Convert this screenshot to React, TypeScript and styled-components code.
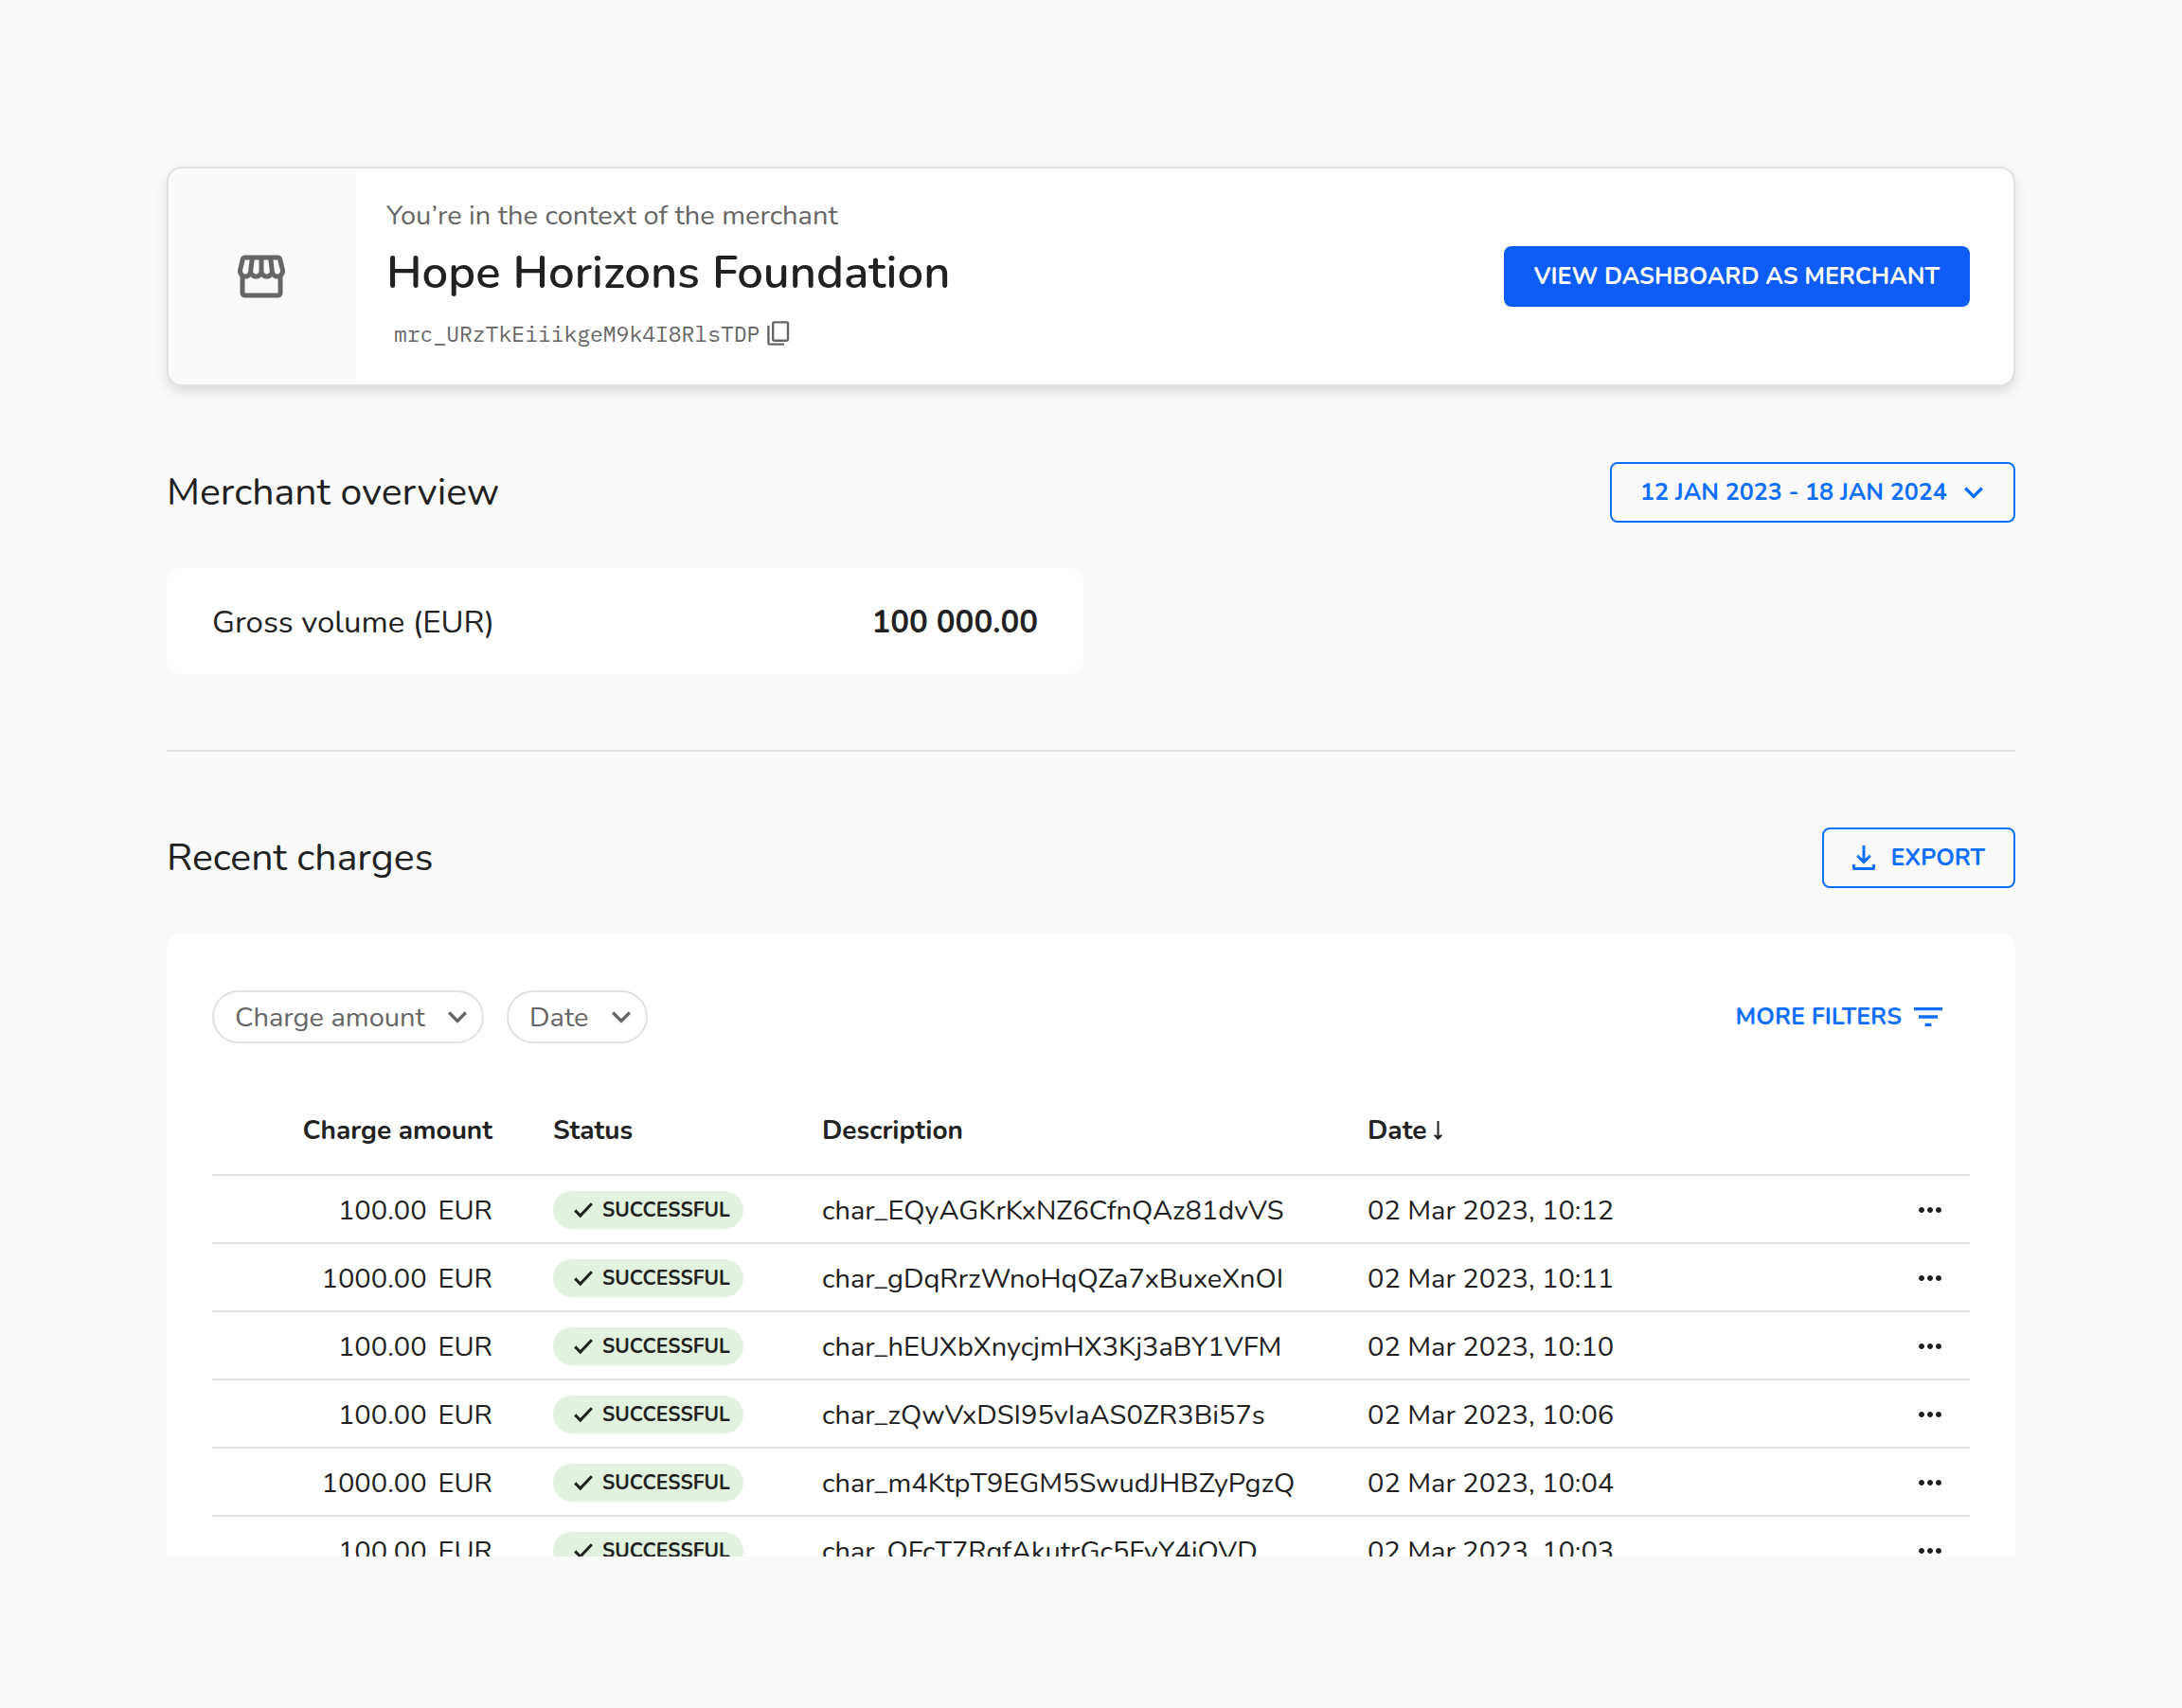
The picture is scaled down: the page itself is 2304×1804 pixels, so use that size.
import React from "react";
import styled, { createGlobalStyle, css } from "styled-components";
import {
  MdFilterList,
  MdKeyboardArrowDown,
  MdMoreHoriz,
  MdOutlineStorefront,
} from "react-icons/md";

const color = {
  page: "#fafafa",
  surface: "#ffffff",
  line: "#e0e0e0",
  text: "#212121",
  muted: "#666666",
  primary: "#0d5cf5",
  link: "#0f6ffd",
  success: "#e2f1e0",
};

const GlobalStyle = createGlobalStyle`
  *, *::before, *::after { box-sizing: border-box; }
  body {
    margin: 0;
    background: ${color.page};
    color: ${color.text};
    font-family: Nunito, Lato, sans-serif;
    font-size: 29px;
    font-variant-ligatures: none;
    -webkit-font-smoothing: antialiased;
  }
  button, select { font-family: inherit; font-variant-ligatures: none; cursor: pointer; }
  h1, h2, p, dl, dt, dd { margin: 0; }
`;

const Page = styled.main`
  display: flex;
  flex-direction: column;
  height: 100vh;
  min-height: 1400px;
  padding: 176px 176px 160px;
`;

/* Merchant banner */

const Banner = styled.section`
  display: flex;
  flex: none;
  overflow: hidden;
  background: ${color.surface};
  border: 2px solid ${color.line};
  border-radius: 16px;
  box-shadow: 0 6px 14px rgba(0, 0, 0, 0.12);
`;

const BannerIcon = styled.div`
  display: flex;
  flex: 0 0 198px;
  align-items: center;
  justify-content: center;
  padding-right: 2px;
  background: ${color.page};
  color: ${color.muted};
`;

const BannerBody = styled.div`
  display: flex;
  flex: 1;
  align-items: center;
  justify-content: space-between;
  gap: 32px;
  padding: 0 46px 0 32px;
`;

const BannerText = styled.div`
  padding: 30px 0 36px;
`;

const BannerContext = styled.p`
  color: ${color.muted};
  line-height: 40px;
`;

const BannerTitle = styled.h1`
  margin: 8px 0 14px;
  font-size: 49px;
  font-weight: 600;
  line-height: 64px;
`;

const MerchantId = styled.div`
  display: flex;
  align-items: center;
  gap: 8px;
  padding-left: 8px;
  color: ${color.muted};
  font-family: "IBM Plex Mono", "Liberation Mono", monospace;
  font-size: 23px;
  line-height: 36px;
`;

const IconButton = styled.button`
  display: inline-flex;
  align-items: center;
  justify-content: center;
  padding: 0;
  border: 0;
  background: none;
  color: inherit;
`;

/* Controls */

const buttonText = css`
  font-size: 25px;
  font-weight: 700;
  text-transform: uppercase;
  white-space: nowrap;
`;

const Button = styled.button<{ $variant: "filled" | "outlined" | "text" }>`
  ${buttonText}
  display: inline-flex;
  align-items: center;
  gap: ${({ $variant }) => ($variant === "text" ? "8px" : "16px")};
  height: ${({ $variant }) => ($variant === "text" ? "56px" : "64px")};
  padding: 0 ${({ $variant }) => ($variant === "text" ? "24px" : "30px")};
  border: ${({ $variant }) => ($variant === "text" ? "0" : "2px solid")};
  border-color: ${({ $variant }) => ($variant === "filled" ? color.primary : color.link)};
  border-radius: 8px;
  background: ${({ $variant }) => ($variant === "filled" ? color.primary : "transparent")};
  color: ${({ $variant }) => ($variant === "filled" ? color.surface : color.link)};
`;

const SelectBox = styled.label<{ $chip?: boolean }>`
  display: inline-grid;
  align-items: center;
  color: ${({ $chip }) => ($chip ? color.muted : color.link)};

  select,
  svg {
    grid-area: 1 / 1;
  }

  svg {
    justify-self: end;
    margin-right: ${({ $chip }) => ($chip ? "8px" : "24px")};
    pointer-events: none;
  }
`;

const RangeSelect = styled.select`
  ${buttonText}
  height: 64px;
  padding: 0 70px 0 30px;
  appearance: none;
  border: 2px solid ${color.link};
  border-radius: 8px;
  background: transparent;
  color: inherit;
`;

const ChipSelect = styled.select`
  height: 56px;
  padding: 0 60px 0 22px;
  appearance: none;
  border: 2px solid ${color.line};
  border-radius: 28px;
  background: transparent;
  color: inherit;
  font-size: 29px;
`;

/* Sections */

const SectionHeader = styled.header`
  display: flex;
  flex: none;
  align-items: center;
  justify-content: space-between;
  margin: 80px 0 48px;
`;

const SectionTitle = styled.h2`
  font-size: 41px;
  font-weight: 400;
  line-height: 56px;
`;

const Summary = styled.dl`
  display: grid;
  flex: none;
  grid-template-columns: 1fr 1fr;
  gap: 16px;
`;

const SummaryItem = styled.div`
  display: flex;
  align-items: center;
  justify-content: space-between;
  padding: 34px 48px 30px;
  border-radius: 16px;
  background: ${color.surface};
  font-size: 33px;
  line-height: 48px;

  dd {
    font-weight: 700;
  }
`;

const Divider = styled.hr`
  flex: none;
  width: 100%;
  height: 2px;
  margin: 80px 0 0;
  border: 0;
  background: ${color.line};
`;

const Panel = styled.div`
  flex: 1;
  min-height: 0;
  overflow: hidden;
  padding: 60px 48px 0;
  border-radius: 16px 16px 0 0;
  background: ${color.surface};
`;

const Toolbar = styled.div`
  display: flex;
  justify-content: space-between;
  margin-bottom: 48px;
`;

const Chips = styled.div`
  display: flex;
  gap: 24px;
`;

/* Charges table */

const Table = styled.table`
  width: 100%;
  border-spacing: 0;
  table-layout: fixed;
`;

const Col = styled.col<{ $width?: string }>`
  width: ${({ $width }) => $width ?? "auto"};
`;

const cell = css<{ $end?: boolean }>`
  border-bottom: 2px solid ${color.line};
  text-align: ${({ $end }) => ($end ? "right" : "left")};
  white-space: nowrap;
`;

const HeadCell = styled.th<{ $end?: boolean }>`
  ${cell}
  height: 92px;
  padding: 0 32px 2px;
  font-size: 28px;
  font-weight: 700;
`;

const Cell = styled.td<{ $end?: boolean }>`
  ${cell}
  height: 72px;
  padding: 2px 32px 0;
`;

const ActionCell = styled(Cell)`
  padding-right: 24px;
`;

const SortLabel = styled.span`
  display: inline-flex;
  align-items: center;
  gap: 8px;
`;

const Money = styled.span`
  display: inline-flex;
  gap: 12px;
`;

const Status = styled.span`
  display: flex;
  align-items: center;
  gap: 10px;
  width: max-content;
  height: 40px;
  padding: 0 14px 0 22px;
  border-radius: 20px;
  background: ${color.success};
  font-size: 21px;
  font-weight: 700;
  text-transform: uppercase;
`;

const Actions = styled.div`
  display: flex;
  justify-content: flex-end;
`;

const CheckIcon = () => (
  <svg width="20" height="18" viewBox="0 0 20 18" fill="none" stroke="currentColor" strokeWidth="3" aria-hidden="true">
    <path d="M1.2 9.4 6.8 15 18.8 2.2" />
  </svg>
);

const CopyIcon = () => (
  <svg width="24" height="26" viewBox="0 0 24 26" fill="none" stroke="currentColor" strokeWidth="2.4" aria-hidden="true">
    <rect x="6.2" y="1.4" width="15.8" height="19.4" rx="1.2" />
    <path d="M1.4 5v18.4q0 1.2 1.2 1.2H18" />
  </svg>
);

const DownloadIcon = () => (
  <svg width="24" height="26" viewBox="0 0 24 26" fill="none" stroke="currentColor" strokeWidth="3" aria-hidden="true">
    <path d="M12 0v17M5.2 10.8 12 17.6l6.8-6.8" />
    <path d="M1.5 20v3.5q0 1 1 1h19q1 0 1-1V20" />
  </svg>
);

const SortArrow = () => (
  <svg width="9" height="20" viewBox="0 0 9 20" fill="currentColor" aria-hidden="true">
    <path d="M3.5 0h2v15.4L8 14.2l1 1.4L4.5 20 0 15.6l1-1.4 2.5 1.2z" />
  </svg>
);

const charges = [
  { amount: "100.00", id: "char_EQyAGKrKxNZ6CfnQAz81dvVS", date: "02 Mar 2023, 10:12" },
  { amount: "1000.00", id: "char_gDqRrzWnoHqQZa7xBuxeXnOI", date: "02 Mar 2023, 10:11" },
  { amount: "100.00", id: "char_hEUXbXnycjmHX3Kj3aBY1VFM", date: "02 Mar 2023, 10:10" },
  { amount: "100.00", id: "char_zQwVxDSI95vIaAS0ZR3Bi57s", date: "02 Mar 2023, 10:06" },
  { amount: "1000.00", id: "char_m4KtpT9EGM5SwudJHBZyPgzQ", date: "02 Mar 2023, 10:04" },
  { amount: "100.00", id: "char_OFcT7RqfAkutrGc5FvY4jOVD", date: "02 Mar 2023, 10:03" },
];

export default function App() {
  return (
    <>
      <GlobalStyle />
      <Page>
        <Banner>
          <BannerIcon>
            <MdOutlineStorefront size={60} />
          </BannerIcon>
          <BannerBody>
            <BannerText>
              <BannerContext>You’re in the context of the merchant</BannerContext>
              <BannerTitle>Hope Horizons Foundation</BannerTitle>
              <MerchantId>
                mrc_URzTkEiiikgeM9k4I8RlsTDP
                <IconButton type="button" aria-label="Copy merchant ID">
                  <CopyIcon />
                </IconButton>
              </MerchantId>
            </BannerText>
            <Button type="button" $variant="filled">
              View dashboard as merchant
            </Button>
          </BannerBody>
        </Banner>

        <SectionHeader>
          <SectionTitle>Merchant overview</SectionTitle>
          <SelectBox>
            <RangeSelect aria-label="Date range">
              <option>12 Jan 2023 - 18 Jan 2024</option>
            </RangeSelect>
            <MdKeyboardArrowDown size={40} />
          </SelectBox>
        </SectionHeader>
        <Summary>
          <SummaryItem>
            <dt>Gross volume (EUR)</dt>
            <dd>100 000.00</dd>
          </SummaryItem>
        </Summary>

        <Divider />

        <SectionHeader>
          <SectionTitle>Recent charges</SectionTitle>
          <Button type="button" $variant="outlined">
            <DownloadIcon />
            Export
          </Button>
        </SectionHeader>
        <Panel>
          <Toolbar>
            <Chips>
              <SelectBox $chip>
                <ChipSelect aria-label="Filter by charge amount">
                  <option>Charge amount</option>
                </ChipSelect>
                <MdKeyboardArrowDown size={40} />
              </SelectBox>
              <SelectBox $chip>
                <ChipSelect aria-label="Filter by date">
                  <option>Date</option>
                </ChipSelect>
                <MdKeyboardArrowDown size={40} />
              </SelectBox>
            </Chips>
            <Button type="button" $variant="text">
              More filters
              <MdFilterList size={40} />
            </Button>
          </Toolbar>
          <Table>
            <colgroup>
              <Col $width="328px" />
              <Col $width="284px" />
              <Col $width="576px" />
              <Col />
              <Col $width="120px" />
            </colgroup>
            <thead>
              <tr>
                <HeadCell scope="col" $end>Charge amount</HeadCell>
                <HeadCell scope="col">Status</HeadCell>
                <HeadCell scope="col">Description</HeadCell>
                <HeadCell scope="col" aria-sort="descending">
                  <SortLabel>
                    Date
                    <SortArrow />
                  </SortLabel>
                </HeadCell>
                <HeadCell scope="col" aria-label="Actions" />
              </tr>
            </thead>
            <tbody>
              {charges.map((charge) => (
                <tr key={charge.id}>
                  <Cell $end>
                    <Money>
                      <span>{charge.amount}</span>
                      <span>EUR</span>
                    </Money>
                  </Cell>
                  <Cell>
                    <Status>
                      <CheckIcon />
                      Successful
                    </Status>
                  </Cell>
                  <Cell>{charge.id}</Cell>
                  <Cell>{charge.date}</Cell>
                  <ActionCell>
                    <Actions>
                      <IconButton type="button" aria-label={`Actions for ${charge.id}`}>
                        <MdMoreHoriz size={36} />
                      </IconButton>
                    </Actions>
                  </ActionCell>
                </tr>
              ))}
            </tbody>
          </Table>
        </Panel>
      </Page>
    </>
  );
}
